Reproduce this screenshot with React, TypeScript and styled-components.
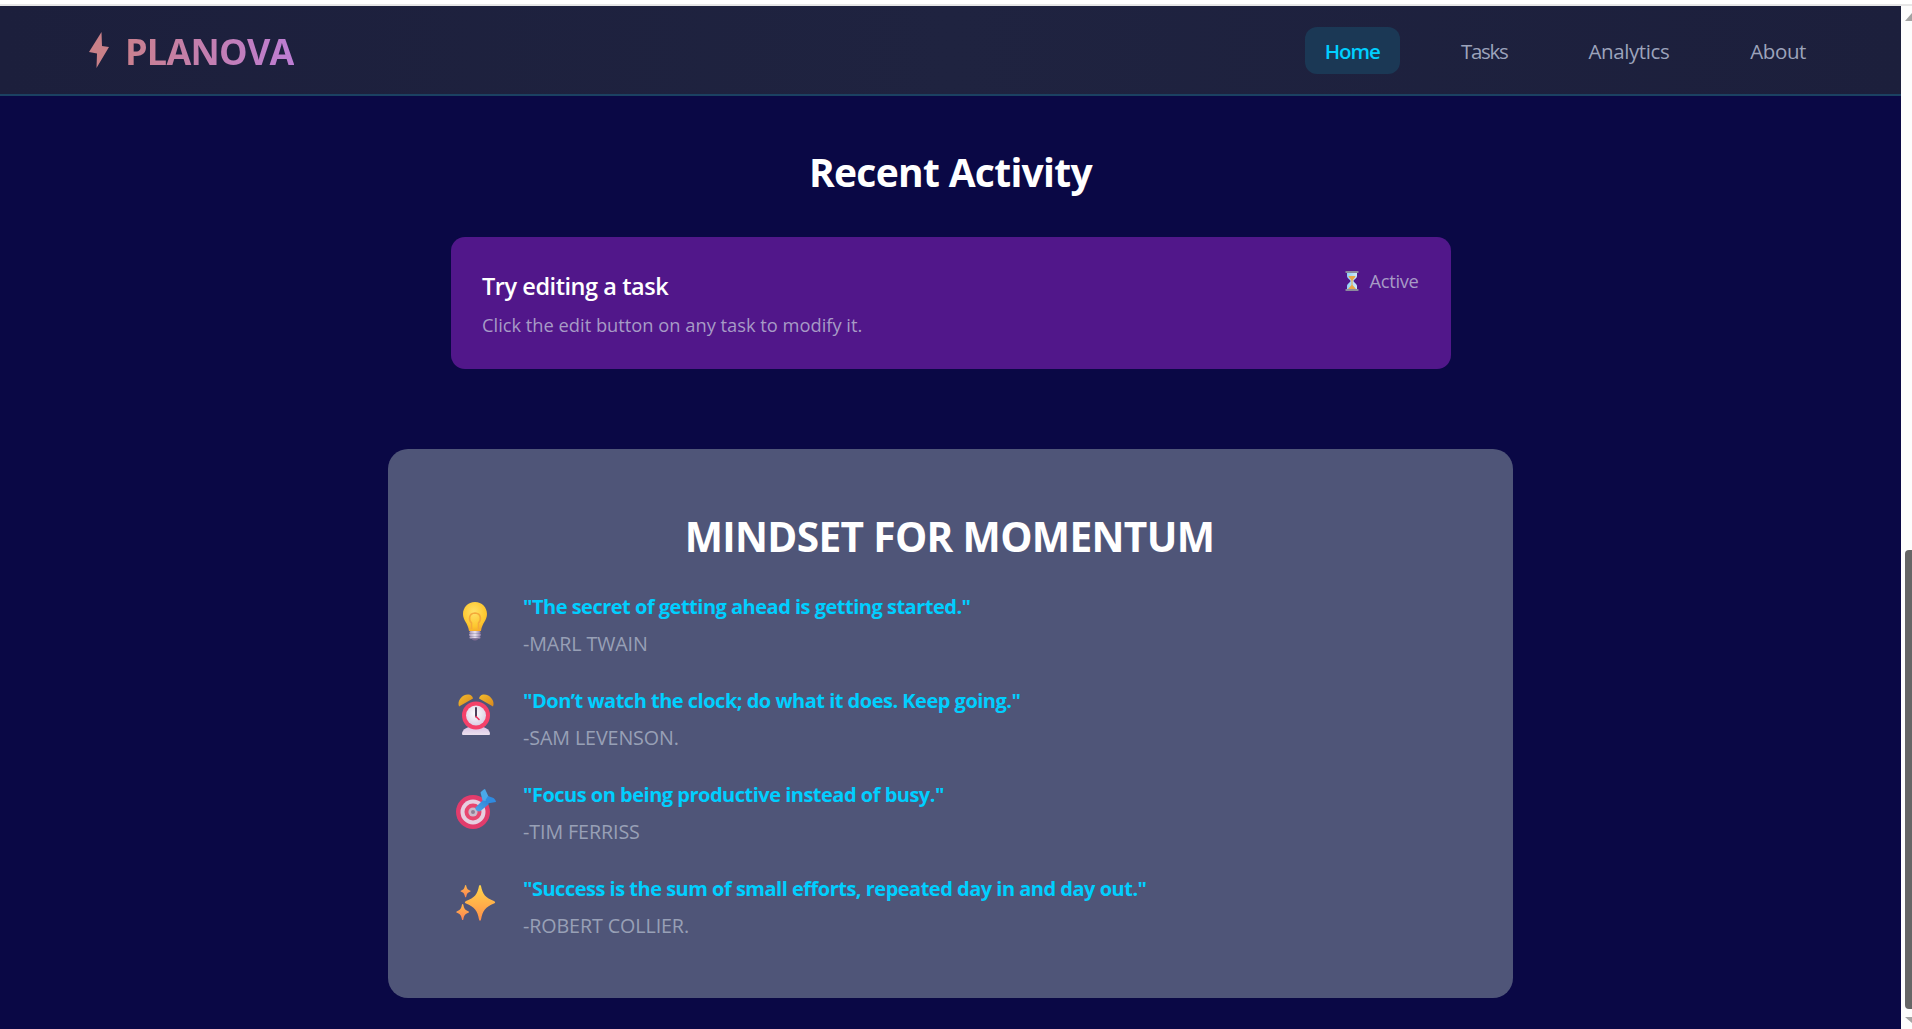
import React from "react";
import styled, { createGlobalStyle } from "styled-components";

const Global = createGlobalStyle`
  html, body { margin: 0; padding: 0; height: 100%; overflow: hidden; background: #fff; }
  * { box-sizing: border-box; }
  body { font-family: "Open Sans", "Noto Sans", "Liberation Sans", sans-serif; }
`;

const Shell = styled.div`
  width: 1912px;
  height: 1029px;
  display: flex;
  flex-direction: column;
  overflow: hidden;
`;
const TopStrip = styled.div`
  height: 6px;
  flex: none;
  background: #fff;
  border-bottom: 2px solid #e6e6e6;
`;
const Body = styled.div`
  flex: 1;
  display: flex;
  min-height: 0;
`;
const Page = styled.div`
  width: 1901px;
  flex: none;
  background: #0a0845;
  display: flex;
  flex-direction: column;
  color: #fff;
`;
const Nav = styled.header`
  height: 90px;
  flex: none;
  background: linear-gradient(90deg, #1c1f3c 0%, #1f2340 50%, #1c1f3c 100%);
  border-bottom: 2px solid #1b4162;
  display: flex;
  align-items: center;
  justify-content: space-between;
  padding: 0 75px 0 89px;
`;
const Logo = styled.div`
  display: flex;
  align-items: center;
  gap: 16px;
`;
const LogoText = styled.span`
  font-size: 36px;
  font-weight: 700;
  letter-spacing: -0.75px;
  line-height: 1;
  padding-top: 3px;
  background: linear-gradient(90deg, #c9808e 0%, #bd7dd4 100%);
  -webkit-background-clip: text;
  background-clip: text;
  color: transparent;
`;
const Links = styled.nav`
  display: flex;
  align-items: center;
  gap: 41px;
`;
const LinkItem = styled.a<{ $active?: boolean; $track?: number }>`
  height: 47px;
  padding: 2px 20px 0;
  border-radius: 12px;
  display: flex;
  align-items: center;
  font-size: 20.5px;
  font-weight: ${(p) => (p.$active ? 600 : 500)};
  letter-spacing: ${(p) => p.$track ?? -0.4}px;
  color: ${(p) => (p.$active ? "#00cfff" : "#9ca3bb")};
  background: ${(p) => (p.$active ? "#1b3855" : "transparent")};
`;
const Content = styled.main`
  flex: 1;
  display: flex;
  flex-direction: column;
  align-items: center;
`;
const SectionTitle = styled.h2`
  margin: 50px 0 0;
  font-size: 39px;
  line-height: 52px;
  font-weight: 700;
  letter-spacing: -0.7px;
  color: #fff;
`;
const ActivityCard = styled.section`
  margin-top: 39px;
  width: 1000px;
  height: 132px;
  border-radius: 14px;
  background: #51178a;
  padding: 33px 32px 0 31.5px;
  display: flex;
  justify-content: space-between;
  align-items: flex-start;
`;
const ActivityTitle = styled.h3`
  margin: 0;
  font-size: 23.5px;
  line-height: 32px;
  font-weight: 600;
  letter-spacing: -0.45px;
  color: #fff;
`;
const ActivityText = styled.p`
  margin: 10px 0 0;
  font-size: 18.3px;
  line-height: 26px;
  color: #a79bc6;
`;
const Status = styled.div`
  display: flex;
  align-items: center;
  gap: 10px;
  margin-top: -2px;
  font-size: 18.3px;
  line-height: 26px;
  letter-spacing: -0.3px;
  color: #a79bc6;
`;
const MindsetCard = styled.section`
  margin-top: 80px;
  width: 1125px;
  height: 549px;
  border-radius: 20px;
  background: #4f5578;
  padding: 62px 64px 0 62px;
`;
const MindsetTitle = styled.h2`
  margin: 0 0 30px;
  text-align: center;
  font-size: 40.6px;
  line-height: 52px;
  font-weight: 700;
  letter-spacing: -0.65px;
  color: #fff;
`;
const QuoteList = styled.ul`
  list-style: none;
  margin: 0;
  padding: 0;
  display: flex;
  flex-direction: column;
  gap: 22px;
`;
const QuoteRow = styled.li`
  display: flex;
  align-items: flex-start;
  gap: 26px;
  height: 72px;
`;
const IconSlot = styled.div`
  width: 42px;
  margin-left: 5px;
  padding-top: 6px;
  flex: none;
`;
const QuoteBody = styled.div`
  display: flex;
  flex-direction: column;
  gap: 9px;
`;
const QuoteText = styled.div`
  font-size: 20px;
  line-height: 28px;
  font-weight: 700;
  letter-spacing: -0.5px;
  color: #00cfff;
`;
const Author = styled.div`
  font-size: 19.7px;
  line-height: 28px;
  letter-spacing: -0.1px;
  color: #98a0b6;
`;
const ScrollTrack = styled.aside`
  width: 11px;
  flex: none;
  background: #fdfdfd;
  padding: 0 0 0 4px;
  display: flex;
  flex-direction: column;
`;
const ScrollUp = styled.svg`
  display: block;
  margin-top: 7px;
  width: 7px;
  height: 8px;
  flex: none;
`;
const ScrollThumb = styled.div`
  margin-top: 529px;
  height: 459px;
  width: 7px;
  flex: none;
  background: #666;
  border-radius: 4px 0 0 4px;
`;
const ScrollDown = styled.svg`
  display: block;
  margin-top: 8px;
  width: 7px;
  height: 6px;
  flex: none;
`;
const IconSvg = styled.svg`
  display: block;
  overflow: visible;
`;

const Bolt = () => (
  <svg width="20" height="36" viewBox="0 0 20 36">
    <path d="M12.5 0 L0 20 L8 21.5 L7.5 36 L20 15 L13 14 Z" fill="#c98088" />
  </svg>
);

const Hourglass = () => (
  <svg width="14" height="20" viewBox="0 0 14 20">
    <defs>
      <linearGradient id="hg" x1="0" x2="1" y1="0" y2="0">
        <stop offset="0" stopColor="#8fd0f5" />
        <stop offset="1" stopColor="#cfeafa" />
      </linearGradient>
    </defs>
    <path d="M2 1.5 H12 V5 C12 7.5 8.5 8.5 8.5 10 C8.5 11.5 12 12.5 12 15 V18.5 H2 V15 C2 12.5 5.5 11.5 5.5 10 C5.5 8.5 2 7.5 2 5 Z" fill="url(#hg)" />
    <path d="M3.4 5 H10.6 C10 7.2 7.8 8 7.5 10 L7.5 14 L11 18 H3 L6.5 14 L6.5 10 C6.2 8 4 7.2 3.4 5 Z" fill="#e9a748" />
    <rect x="0.5" y="0" width="13" height="2" rx="0.5" fill="#8a8a9c" />
    <rect x="0.5" y="18" width="13" height="2" rx="0.5" fill="#8a8a9c" />
  </svg>
);

const Bulb = () => (
  <IconSvg width="42" height="44" viewBox="0 0 42 44">
    <defs>
      <radialGradient id="bulbG" cx="0.45" cy="0.35" r="0.7">
        <stop offset="0" stopColor="#ffe168" />
        <stop offset="0.7" stopColor="#fdc72e" />
        <stop offset="1" stopColor="#f4a62a" />
      </radialGradient>
      <linearGradient id="screwG" x1="0" x2="1" y1="0" y2="0">
        <stop offset="0" stopColor="#a996b8" />
        <stop offset="0.5" stopColor="#e8e0ee" />
        <stop offset="1" stopColor="#8f7ca6" />
      </linearGradient>
    </defs>
    <path d="M20 3 C13 3 8 8.5 8 15 C8 21.5 13 24 14 32 H26 C27 24 32 21.5 32 15 C32 8.5 27 3 20 3 Z" fill="url(#bulbG)" />
    <path d="M16.5 30 V24 C13.5 21 13.5 14.5 20 14 C26.5 14.5 26.5 21 23.5 24 V30" fill="none" stroke="#f4a93a" strokeWidth="1.6" />
    <rect x="14.5" y="32" width="11" height="2.4" rx="1.2" fill="url(#screwG)" />
    <rect x="14" y="34.6" width="12" height="2.4" rx="1.2" fill="url(#screwG)" />
    <rect x="14.5" y="37.2" width="11" height="2.4" rx="1.2" fill="url(#screwG)" />
    <path d="M16.5 39.4 H23.5 C23 41 21.3 41.4 20 41.4 C18.7 41.4 17 41 16.5 39.4 Z" fill="#7a688f" />
  </IconSvg>
);

const Alarm = () => (
  <IconSvg width="42" height="44" viewBox="0 0 42 44">
    <defs>
      <linearGradient id="bellG" x1="0" x2="1" y1="0" y2="1">
        <stop offset="0" stopColor="#f3bc2c" />
        <stop offset="1" stopColor="#d8881e" />
      </linearGradient>
      <radialGradient id="faceG" cx="0.45" cy="0.4" r="0.65">
        <stop offset="0" stopColor="#fff" />
        <stop offset="1" stopColor="#d9cbe2" />
      </radialGradient>
      <linearGradient id="baseG" x1="0" x2="0" y1="0" y2="1">
        <stop offset="0" stopColor="#d8c0e4" />
        <stop offset="1" stopColor="#ece0ee" />
      </linearGradient>
    </defs>
    <path d="M7 41 C7 36 13 33 21 33 C29 33 35 36 35 41 C35 41.7 34.4 42 33.5 42 H8.5 C7.6 42 7 41.7 7 41 Z" fill="url(#baseG)" />
    <path d="M4 13.5 C1.5 7.5 8 0.5 14 1.5 C16.3 2 17.5 3.5 18 5.5 Z" fill="url(#bellG)" />
    <path d="M38 13.5 C40.5 7.5 34 0.5 28 1.5 C25.7 2 24.5 3.5 24 5.5 Z" fill="url(#bellG)" />
    <circle cx="21" cy="22.5" r="14" fill="#f5416a" />
    <circle cx="21" cy="22.5" r="10" fill="url(#faceG)" />
    <path d="M21 15 V23.5" stroke="#3a2d4a" strokeWidth="1.8" strokeLinecap="round" />
    <path d="M21 23.5 L24 26.5" stroke="#f0345f" strokeWidth="1.6" strokeLinecap="round" />
  </IconSvg>
);

const Target = () => (
  <IconSvg width="42" height="44" viewBox="0 0 42 44">
    <defs>
      <linearGradient id="dartG" x1="0" x2="1" y1="1" y2="0">
        <stop offset="0" stopColor="#4aa9e9" />
        <stop offset="1" stopColor="#2f7fd8" />
      </linearGradient>
    </defs>
    <circle cx="18" cy="25" r="17" fill="#e23c6c" />
    <circle cx="18" cy="25" r="12.5" fill="#e7cfe0" />
    <circle cx="18" cy="25" r="8.5" fill="#e8476f" />
    <circle cx="18" cy="25" r="4.6" fill="#c9bccb" />
    <circle cx="18" cy="25" r="2" fill="#8f7f96" />
    <path d="M20.5 20.5 L29 12 L34 17 L25.5 24 C23.5 25.5 19.5 23 20.5 20.5 Z" fill="url(#dartG)" />
    <path d="M27.5 13.5 L25.5 5.5 C26.5 4 28.5 2.5 30 2 L33.5 9.5 L31 14 Z" fill="#4aa9e9" />
    <path d="M32 16.5 L41 15 C41 13.5 39.5 12 38.5 11 L33 9 L30.5 13 Z" fill="#2f8be0" />
  </IconSvg>
);

const Sparkles = () => (
  <IconSvg width="42" height="44" viewBox="0 0 42 44">
    <defs>
      <linearGradient id="spG" x1="0.5" x2="0.5" y1="0" y2="1">
        <stop offset="0" stopColor="#ffd54a" />
        <stop offset="1" stopColor="#ff8f4a" />
      </linearGradient>
      <linearGradient id="spS" x1="0.5" x2="0.5" y1="0" y2="1">
        <stop offset="0" stopColor="#ffb84a" />
        <stop offset="1" stopColor="#ff8252" />
      </linearGradient>
    </defs>
    <path d="M24 5 C24.5 3.7 25.5 3.7 26 5 C27.5 13 30.5 17 39 20 C40.5 20.8 40.5 22 39 22.6 C30.5 25.8 27.5 30 26 38.5 C25.5 40.3 24.5 40.3 24 38.5 C22.5 30 19.5 25.8 11 22.6 C9.5 22 9.5 20.8 11 20 C19.5 17 22.5 13 24 5 Z" fill="url(#spG)" />
    <path d="M10 4.5 C10.3 3.7 10.9 3.7 11.2 4.5 C11.9 7.8 12.7 8.7 15 9.5 C15.8 9.9 15.8 10.4 15 10.8 C12.7 11.6 11.9 12.5 11.2 15.8 C10.9 16.5 10.3 16.5 10 15.8 C9.3 12.5 8.5 11.6 6.2 10.8 C5.4 10.4 5.4 9.9 6.2 9.5 C8.5 8.7 9.3 7.8 10 4.5 Z" fill="url(#spS)" />
    <path d="M7 23.5 C7.3 22.7 8 22.7 8.3 23.5 C9.1 27.7 10.2 29 13.3 30.2 C14.3 30.7 14.3 31.4 13.3 31.8 C10.2 33 9.1 34.3 8.3 38.5 C8 39.3 7.3 39.3 7 38.5 C6.2 34.3 5.1 33 2 31.8 C1 31.4 1 30.7 2 30.2 C5.1 29 6.2 27.7 7 23.5 Z" fill="url(#spS)" />
  </IconSvg>
);

const quotes = [
  { icon: <Bulb />, text: '"The secret of getting ahead is getting started."', by: "-MARL TWAIN" },
  { icon: <Alarm />, text: '"Don’t watch the clock; do what it does. Keep going."', by: "-SAM LEVENSON." },
  { icon: <Target />, text: '"Focus on being productive instead of busy."', by: "-TIM FERRISS" },
  { icon: <Sparkles />, text: '"Success is the sum of small efforts, repeated day in and day out."', by: "-ROBERT COLLIER." },
];

export default function App() {
  return (
    <Shell>
      <Global />
      <TopStrip />
      <Body>
        <Page>
          <Nav>
            <Logo>
              <Bolt />
              <LogoText>PLANOVA</LogoText>
            </Logo>
            <Links>
              <LinkItem $active $track={-1}>Home</LinkItem>
              <LinkItem $track={-1.3}>Tasks</LinkItem>
              <LinkItem>Analytics</LinkItem>
              <LinkItem>About</LinkItem>
            </Links>
          </Nav>
          <Content>
            <SectionTitle>Recent Activity</SectionTitle>
            <ActivityCard>
              <div>
                <ActivityTitle>Try editing a task</ActivityTitle>
                <ActivityText>Click the edit button on any task to modify it.</ActivityText>
              </div>
              <Status>
                <Hourglass />
                Active
              </Status>
            </ActivityCard>
            <MindsetCard>
              <MindsetTitle>MINDSET FOR MOMENTUM</MindsetTitle>
              <QuoteList>
                {quotes.map((q) => (
                  <QuoteRow key={q.by}>
                    <IconSlot>{q.icon}</IconSlot>
                    <QuoteBody>
                      <QuoteText>{q.text}</QuoteText>
                      <Author>{q.by}</Author>
                    </QuoteBody>
                  </QuoteRow>
                ))}
              </QuoteList>
            </MindsetCard>
          </Content>
        </Page>
        <ScrollTrack>
          <ScrollUp viewBox="0 0 7 8">
            <path d="M7 0 V8 H0 Z" fill="#a3a3a3" />
          </ScrollUp>
          <ScrollThumb />
          <ScrollDown viewBox="0 0 7 6">
            <path d="M0 0 H7 V6 Z" fill="#a3a3a3" />
          </ScrollDown>
        </ScrollTrack>
      </Body>
    </Shell>
  );
}
